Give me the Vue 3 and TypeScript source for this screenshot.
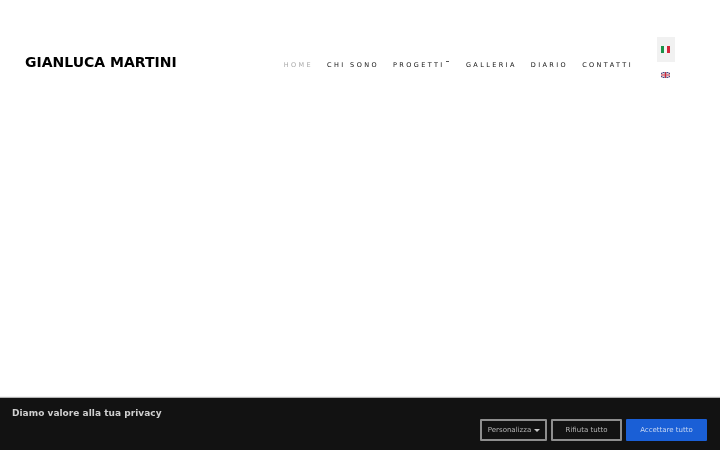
<script setup lang="ts">
interface NavItem {
  label: string;
  active?: boolean;
  caret?: boolean;
}

const navItems: NavItem[] = [
  { label: 'Home', active: true },
  { label: 'Chi sono' },
  { label: 'Progetti', caret: true },
  { label: 'Galleria' },
  { label: 'Diario' },
  { label: 'Contatti' }
]
</script>

<template>
  <div class="page">
    <header class="header">
      <a class="logo">GIANLUCA MARTINI</a>
      <nav class="nav">
        <a v-for="item in navItems" :key="item.label" class="nav-link" :class="{ active: item.active }">
          {{ item.label }}<span v-if="item.caret" class="caret"></span>
        </a>
      </nav>
      <div class="langs">
        <div class="lang current">
          <svg width="9" height="7" viewBox="0 0 9 7">
            <rect width="3" height="7" fill="#1a9248" />
            <rect x="3" width="3" height="7" fill="#f4f4f4" />
            <rect x="6" width="3" height="7" fill="#d3263a" />
          </svg>
        </div>
        <div class="lang">
          <svg width="9" height="6" viewBox="0 0 9 6">
            <rect width="9" height="6" fill="#2b3a7d" />
            <path d="M0 0L9 6M9 0L0 6" stroke="#f0d8dc" stroke-width="1.2" />
            <path d="M4.5 0V6M0 3H9" stroke="#eee" stroke-width="2" />
            <path d="M4.5 0V6M0 3H9" stroke="#c8283c" stroke-width="1.2" />
          </svg>
        </div>
      </div>
    </header>

    <section class="cookie-bar">
      <h2 class="cookie-title">Diamo valore alla tua privacy</h2>
      <div class="cookie-actions">
        <button class="btn first">Personalizza<span class="down"></span></button>
        <button class="btn reject">Rifiuta tutto</button>
        <button class="btn accept">Accettare tutto</button>
      </div>
    </section>
  </div>
</template>

<style>
html,
body {
  margin: 0;
  background: #fff;
}
</style>

<style scoped>
.page {
  display: flex;
  flex-direction: column;
  justify-content: space-between;
  width: 720px;
  height: 450px;
  overflow: hidden;
  font-family: "DejaVu Sans", sans-serif;
  will-change: transform;
}
.header {
  display: flex;
  align-items: flex-start;
  padding: 37px 45px 0 25px;
}
.logo {
  margin-top: 16px;
  font-size: 14px;
  line-height: 18px;
  font-weight: 700;
  color: #000;
  white-space: nowrap;
}
.nav {
  display: flex;
  gap: 14px;
  margin-left: auto;
  margin-top: 23px;
  margin-right: 24px;
}
.nav-link {
  font-size: 6.5px;
  line-height: 10px;
  letter-spacing: 2.4px;
  text-transform: uppercase;
  color: #111;
  white-space: nowrap;
}
.nav-link.active {
  color: #a8a8a8;
}
.caret {
  display: inline-block;
  width: 3px;
  height: 2px;
  margin-left: 1px;
  margin-right: 3.3px;
  vertical-align: 4px;
  border-top: 1px solid #555;
  box-sizing: border-box;
}
.langs {
  display: flex;
  flex-direction: column;
  width: 18px;
}
.lang {
  display: flex;
  align-items: center;
  justify-content: center;
  height: 25px;
  padding-right: 1px;
  box-sizing: border-box;
}
.lang.current {
  background: #f1f1f1;
}
.cookie-bar {
  display: flex;
  justify-content: space-between;
  height: 52px;
  box-sizing: border-box;
  padding: 9px 13px 9px 12px;
  background: #121212;
  box-shadow: 0 -1px 1px rgba(0, 0, 0, 0.3);
}
.cookie-title {
  margin: 0;
  font-size: 9px;
  line-height: 12px;
  font-weight: 700;
  letter-spacing: 0.03px;
  color: #cfcfcf;
}
.cookie-actions {
  display: flex;
  align-items: flex-end;
  gap: 4px;
}
.btn {
  display: flex;
  align-items: center;
  justify-content: center;
  height: 22px;
  padding: 0;
  box-sizing: border-box;
  border: 2px solid #8e8e8e;
  border-radius: 1px;
  background: #121212;
  font-family: "DejaVu Sans", sans-serif;
  font-size: 7px;
  color: #b5b5b5;
  width: 67px;
}
.first {
  padding-left: 1px;
}
.reject {
  width: 71px;
}
.accept {
  width: 81px;
  border-color: #1a5fd6;
  background: #1a5fd6;
  color: #c6d6f2;
}
.down {
  margin-left: 3px;
  border-left: 3px solid transparent;
  border-right: 3px solid transparent;
  border-top: 3px solid #c8c8c8;
}
</style>
